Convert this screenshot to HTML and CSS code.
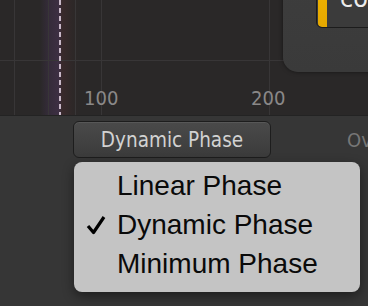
FILE: index.html
```html
<!DOCTYPE html>
<html lang="en">
<head>
    <meta charset="UTF-8">
    <title>Phase Mode</title>
    <link rel="stylesheet" href="styles.css">
</head>
<body>
    <div class="screen">
        <!-- Graph area -->
        <div class="graph">
            <div class="vline" style="left: 14px"></div>
            <div class="vline" style="left: 48px"></div>
            <div class="vline" style="left: 75px"></div>
            <div class="vline" style="left: 101px"></div>
            <div class="vline" style="left: 269px"></div>
            <div class="hline"></div>
            <div class="marker"></div>
            <span class="freq" style="left: 84px">100</span>
            <span class="freq" style="left: 251px">200</span>

            <!-- Floating panel -->
            <div class="panel">
                <div class="panel-btn">
                    <span class="stripe"></span>
                    <span class="panel-label">co</span>
                </div>
            </div>
        </div>

        <!-- Bottom bar -->
        <div class="toolbar">
            <button class="phase-btn" type="button">Dynamic Phase</button>
            <span class="toolbar-label">Ov</span>
        </div>

        <!-- Popup menu -->
        <ul class="menu">
            <li><span class="check"></span>Linear Phase</li>
            <li>
                <span class="check">
                    <svg width="20" height="20" viewBox="0 0 20 20">
                        <path d="M2 11 L7.5 17.5 L18 2" fill="none" stroke="#000" stroke-width="3.2" stroke-linejoin="round"/>
                    </svg>
                </span>Dynamic Phase
            </li>
            <li><span class="check"></span>Minimum Phase</li>
        </ul>
    </div>
</body>
</html>
```

FILE: styles.css
```css
body {
    margin: 0;
    background-color: #353535;
    overflow: hidden;
}

.screen {
    position: relative;
    width: 368px;
    height: 306px;
    display: flex;
    flex-direction: column;
}

.graph {
    position: relative;
    height: 115px;
    background:
        linear-gradient(to right,
            rgba(0, 0, 0, 0) 40px,
            rgba(75, 50, 95, 0.3) 48px,
            rgba(85, 55, 100, 0.45) 59px,
            rgba(85, 45, 50, 0.35) 62px,
            rgba(70, 40, 40, 0.15) 72px,
            rgba(0, 0, 0, 0) 80px),
        #2a2828;
    overflow: hidden;
}

.vline {
    position: absolute;
    top: 0;
    bottom: 0;
    width: 1px;
    background-color: #383637;
}

.hline {
    position: absolute;
    left: 0;
    right: 0;
    top: 60px;
    height: 1px;
    background-color: #383637;
}

.marker {
    position: absolute;
    left: 59px;
    top: 0;
    bottom: 0;
    width: 2px;
    background: repeating-linear-gradient(to bottom, #c9b9c9 0, #c9b9c9 5px, transparent 5px, transparent 8px);
}

.freq {
    position: absolute;
    top: 86px;
    font-family: "DejaVu Sans Condensed", "DejaVu Sans", sans-serif;
    font-stretch: condensed;
    font-size: 20px;
    color: #8a8888;
}

.panel {
    position: absolute;
    left: 283px;
    top: -20px;
    width: 110px;
    height: 92px;
    border-radius: 15px;
    background: linear-gradient(to bottom, #3d3d3d, #3a3a3a);
    box-shadow: 0 0 4px rgba(0, 0, 0, 0.5);
}

.panel-btn {
    position: absolute;
    left: 33px;
    top: 0;
    width: 80px;
    height: 46px;
    border: 1px solid #1c1c1c;
    border-radius: 6px;
    background-color: #3b3b3b;
    display: flex;
    overflow: hidden;
}

.stripe {
    width: 9px;
    margin-left: 1px;
    background: linear-gradient(to bottom, #f0b400, #e5a800);
    border-radius: 0 0 0 4px;
}

.panel-label {
    margin-left: 13px;
    margin-top: 4px;
    font-family: "DejaVu Sans", sans-serif;
    font-size: 24px;
    color: #ececec;
}

.toolbar {
    flex: 1;
    display: flex;
    align-items: flex-start;
    border-top: 1px solid #232323;
    background-color: #363636;
    overflow: hidden;
}

.phase-btn {
    flex-shrink: 0;
    margin: 5px 0 0 73px;
    width: 198px;
    height: 37px;
    padding: 0;
    border: 1px solid #1d1d1d;
    border-radius: 6px;
    background: linear-gradient(to bottom, #4a4a4a, #3b3b3b);
    box-shadow: inset 0 1px 0 rgba(255, 255, 255, 0.08);
    font-family: "DejaVu Sans Condensed", "DejaVu Sans", sans-serif;
    font-stretch: condensed;
    font-size: 20.5px;
    color: #d2d2d2;
}

.toolbar-label {
    flex-shrink: 0;
    margin: 12px 0 0 76px;
    font-family: "DejaVu Sans Condensed", "DejaVu Sans", sans-serif;
    font-stretch: condensed;
    font-size: 20px;
    color: #777;
}

.menu {
    position: absolute;
    left: 74px;
    top: 162px;
    width: 286px;
    height: 130px;
    margin: 0;
    padding: 4px 0 0 0;
    box-sizing: border-box;
    list-style: none;
    border-radius: 8px;
    background-color: #c4c4c4;
    box-shadow: 0 4px 12px rgba(0, 0, 0, 0.45);
}

.menu li {
    display: flex;
    align-items: center;
    height: 39px;
    font-family: "Liberation Sans", Arial, sans-serif;
    font-size: 28px;
    color: #0a0a0a;
}

.check {
    display: flex;
    justify-content: center;
    width: 43px;
}
```
